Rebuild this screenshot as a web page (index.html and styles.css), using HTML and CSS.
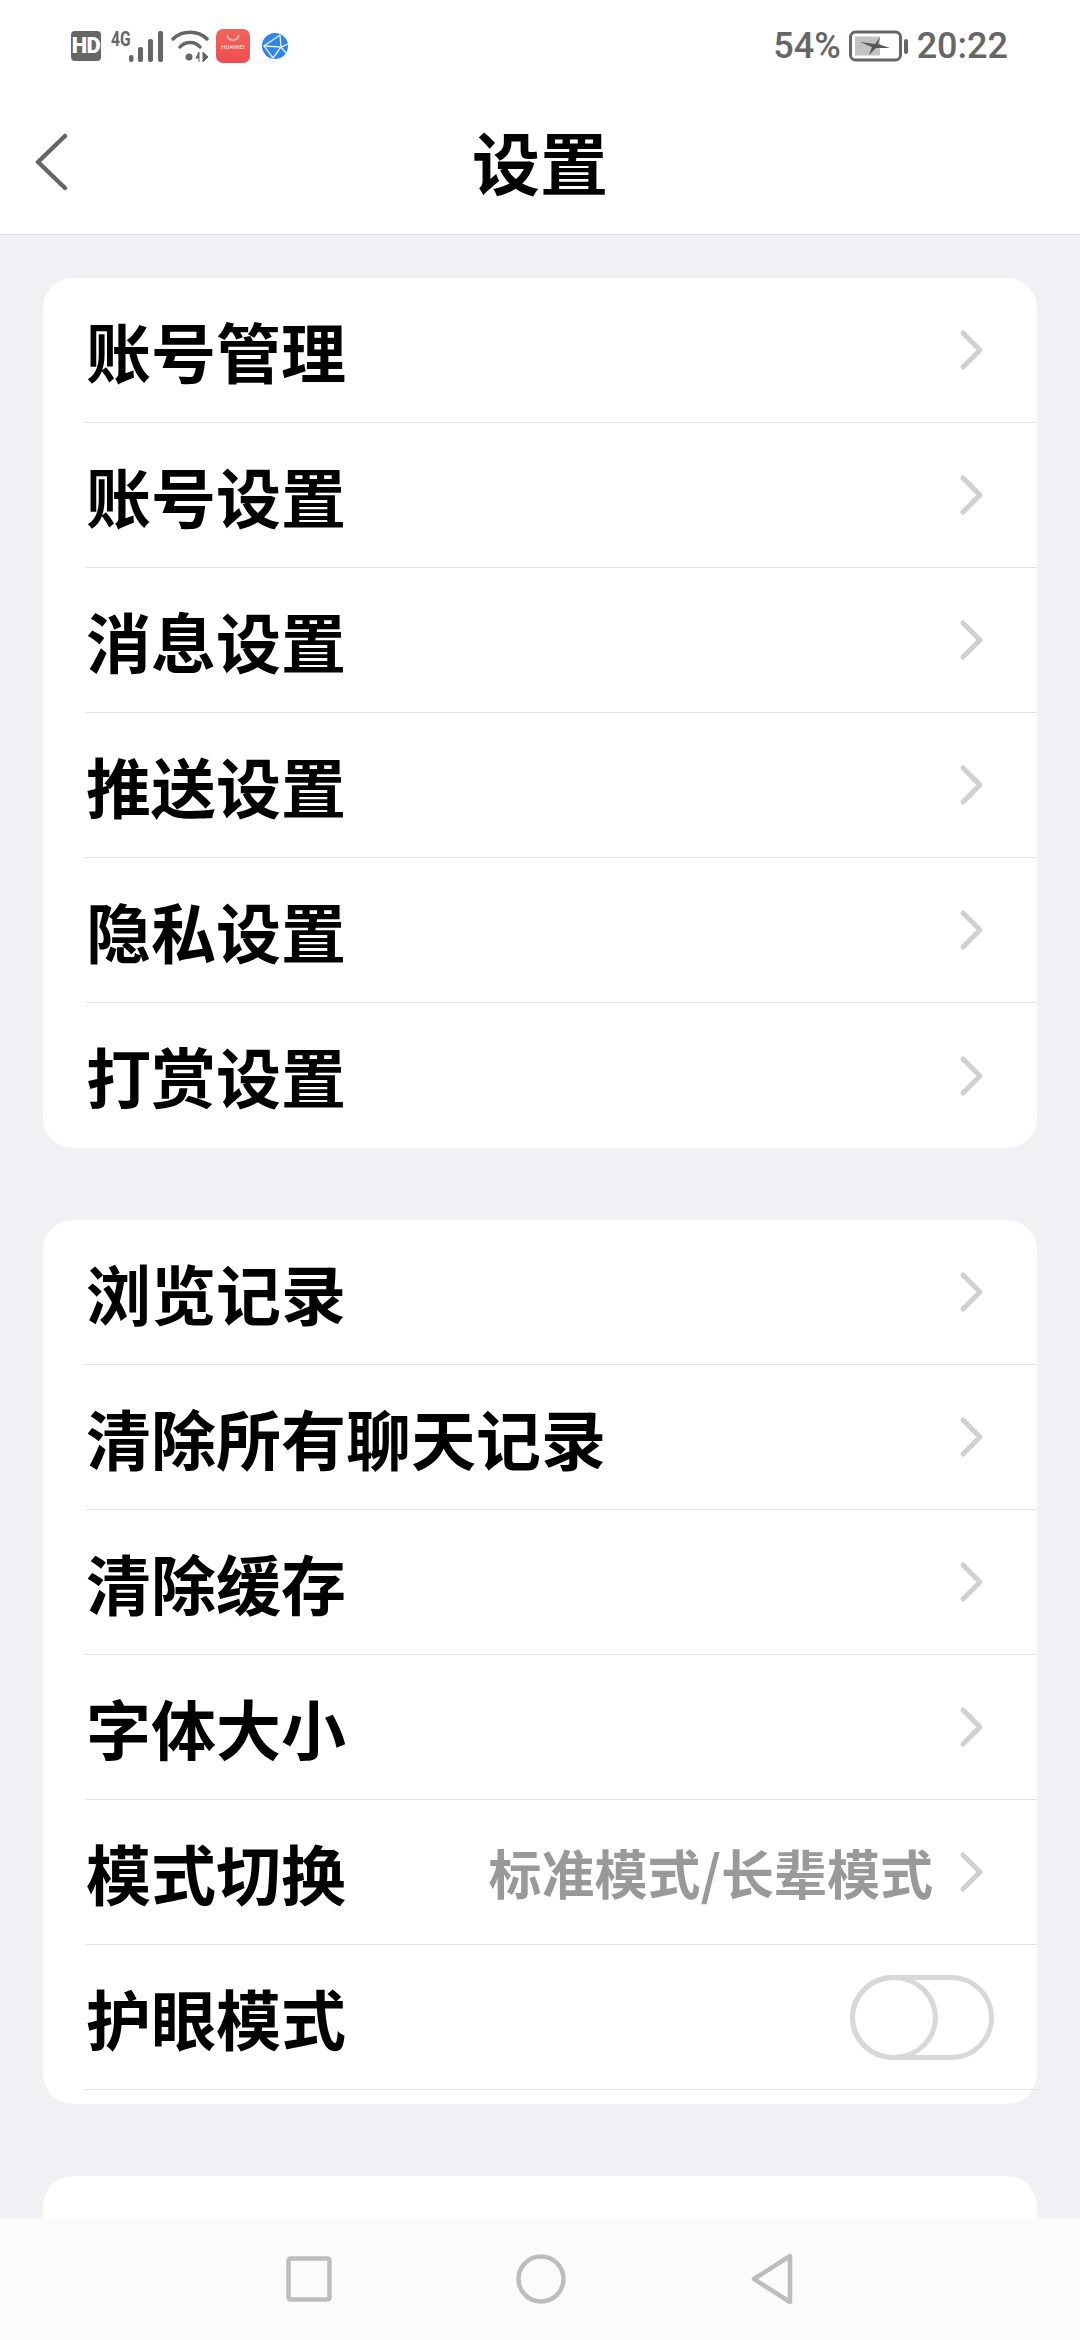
FILE: index.html
```html
<!DOCTYPE html>
<html lang="zh-CN">
<head>
<meta charset="utf-8">
<title>设置</title>
<link rel="stylesheet" href="styles.css">
</head>
<body>
<svg class="defs" width="0" height="0" aria-hidden="true">
  <symbol id="chev" viewBox="0 0 26 42"><path d="M4 4 L21 21 L4 38" fill="none" stroke="#d0d0d0" stroke-width="5" stroke-linecap="round" stroke-linejoin="round"/></symbol>
</svg>
<div class="page">
  <header class="top">
    <div class="status">
      <div class="status-left">
        <span class="hd">HD</span>
        <span class="net">
          <span class="four-g">4G</span>
          <svg class="bars" width="34" height="31" viewBox="0 0 34 31"><g fill="#666"><rect x="0" y="24" width="4.500" height="7" rx="2"/><rect x="9" y="16" width="5" height="15" rx="2"/><rect x="19" y="8" width="5" height="23" rx="2"/><rect x="29" y="0" width="5" height="31" rx="2"/></g></svg>
        </span>
        <svg class="wifi" width="38" height="32" viewBox="0 0 38 32"><g fill="none" stroke="#666" stroke-width="3.500" stroke-linecap="round"><path d="M2 9 C11 0 27 0 36 9"/><path d="M9 17 C14 11 24 11 29 17"/></g><circle cx="18" cy="27" r="3.500" fill="#666"/><path d="M28 32 V22 L25 28 H28 M32 22 V32 L37 27 Z" fill="#666" stroke="#666" stroke-width="1"/></svg>
        <span class="huawei">
          <svg width="14" height="8" viewBox="0 0 14 8"><path d="M1 1 C3 8 11 8 13 1" fill="none" stroke="#fff" stroke-width="1.200" opacity=".8"/></svg>
          <span class="huawei-name">HUAWEI</span>
        </span>
        <svg class="globe" width="26" height="26" viewBox="0 0 26 26"><circle cx="13" cy="13" r="13" fill="#2f86e8"/><g fill="none" stroke="#e4f0fd" stroke-width="1.300"><path d="M18 2 L2 13 L11 25"/><path d="M18 2 L19 14 L11 25"/><path d="M2 13 L19 14 L26 11"/><path d="M19 14 L24 20"/></g></svg>
      </div>
      <div class="status-right">
        <span class="stat-text">54%</span>
        <svg class="battery" width="60" height="32" viewBox="0 0 60 32"><rect x="1.500" y="2" width="50" height="28" rx="5" fill="none" stroke="#666" stroke-width="3"/><rect x="6" y="6.500" width="25" height="19" fill="#c2c2c2"/><path d="M11 12 L26 14 L31 7 L29 14 L41 18 L27 18 L20 25 L23 17 Z" fill="#555"/><rect x="55" y="9" width="4" height="15" rx="2" fill="#666"/></svg>
        <span class="stat-text">20:22</span>
      </div>
    </div>
    <div class="title-bar">
      <svg class="back" width="34" height="58" viewBox="0 0 34 58"><path d="M31 3 L4 29 L31 55" fill="none" stroke="#666" stroke-width="4.500" stroke-linecap="round" stroke-linejoin="round"/></svg>
      <h1 class="title">设置</h1>
    </div>
  </header>

  <main class="content">
    <section class="card">
      <div class="row"><span class="label">账号管理</span><svg class="chevron"><use href="#chev"/></svg></div>
      <div class="row"><span class="label">账号设置</span><svg class="chevron"><use href="#chev"/></svg></div>
      <div class="row"><span class="label">消息设置</span><svg class="chevron"><use href="#chev"/></svg></div>
      <div class="row"><span class="label">推送设置</span><svg class="chevron"><use href="#chev"/></svg></div>
      <div class="row"><span class="label">隐私设置</span><svg class="chevron"><use href="#chev"/></svg></div>
      <div class="row row-last"><span class="label">打赏设置</span><svg class="chevron"><use href="#chev"/></svg></div>
    </section>
    <section class="card card-pad">
      <div class="row"><span class="label">浏览记录</span><svg class="chevron"><use href="#chev"/></svg></div>
      <div class="row"><span class="label">清除所有聊天记录</span><svg class="chevron"><use href="#chev"/></svg></div>
      <div class="row"><span class="label">清除缓存</span><svg class="chevron"><use href="#chev"/></svg></div>
      <div class="row"><span class="label">字体大小</span><svg class="chevron"><use href="#chev"/></svg></div>
      <div class="row"><span class="label">模式切换</span><span class="value">标准模式/长辈模式</span><svg class="chevron"><use href="#chev"/></svg></div>
      <div class="row"><span class="label">护眼模式</span><span class="toggle"><span class="knob"></span></span></div>
    </section>
    <section class="card card-tall"></section>
  </main>

  <nav class="navbar">
    <svg width="46" height="46" viewBox="0 0 46 46"><rect x="2.500" y="2.500" width="41" height="41" rx="2" fill="none" stroke="#bdbdbd" stroke-width="4.500"/></svg>
    <svg width="50" height="50" viewBox="0 0 50 50"><circle cx="25" cy="25" r="22.500" fill="none" stroke="#bdbdbd" stroke-width="4.500"/></svg>
    <svg width="44" height="52" viewBox="0 0 44 52"><path d="M40 3 L4 26 L40 49 Z" fill="none" stroke="#bdbdbd" stroke-width="4.500" stroke-linejoin="round"/></svg>
  </nav>
</div>
</body>
</html>
```
FILE: styles.css
```css
* { box-sizing: border-box; }
html, body { margin: 0; padding: 0; }
body {
  font-family: "Noto Sans CJK SC", "Noto Sans", sans-serif;
  background: #f0f0f5;
}
.defs { position: absolute; }
.page {
  position: relative;
  width: 1080px;
  height: 2340px;
  overflow: hidden;
  background: #f0f0f5;
}
.top {
  height: 235px;
  background: #fff;
  border-bottom: 1px solid #e0e0e6;
}
.status {
  height: 92px;
  padding: 0 72px 0 71px;
  display: flex;
  align-items: center;
  justify-content: space-between;
}
.status-left { display: flex; align-items: center; }
.hd {
  width: 30px;
  height: 30px;
  border-radius: 4px;
  background: #666;
  color: #fff;
  font: 900 22px/30px "Roboto", sans-serif;
  text-align: center;
  letter-spacing: -0.5px;
}
.net { display: flex; align-items: flex-end; margin-left: 10px; }
.four-g {
  font: 700 20px/16px "Roboto", sans-serif;
  color: #666;
  align-self: flex-start;
  width: 18px;
  transform: scaleX(.78);
  transform-origin: left;
}
.wifi { margin-left: 8px; }
.huawei {
  width: 34px;
  height: 34px;
  margin-left: 7px;
  border-radius: 7px;
  background: linear-gradient(#f2645e, #ee4e50);
  display: flex;
  flex-direction: column;
  align-items: center;
  padding-top: 5px;
}
.huawei-name {
  font: 400 6px/10px "Roboto", sans-serif;
  color: #fff;
  letter-spacing: .3px;
}
.globe { margin-left: 12px; }
.status-right {
  display: flex;
  align-items: center;
  gap: 8px;
  color: #666;
}
.stat-text {
  font: 500 36px/40px "Roboto", sans-serif;
}
.title-bar {
  position: relative;
  height: 142px;
  display: flex;
  align-items: center;
  justify-content: center;
}
.back { position: absolute; left: 34px; top: 41px; }
.title {
  margin: 0 0 4px;
  font-size: 68px;
  line-height: 90px;
  font-weight: 700;
  color: #000;
}
.content {
  padding: 43px 43px 0;
  display: flex;
  flex-direction: column;
  gap: 72px;
}
.card {
  background: #fff;
  border-radius: 30px;
  padding-left: 42px;
  flex: none;
}
.card-pad { padding-bottom: 14px; }
.card-tall { height: 120px; }
.row {
  height: 145px;
  display: flex;
  align-items: center;
  border-bottom: 1px solid #e2e2e4;
  padding-right: 52px;
}
.row-last { border-bottom: 0; }
.label {
  flex: 1;
  font-size: 65px;
  line-height: 80px;
  font-weight: 700;
  color: #000;
  padding-left: 1px;
  padding-bottom: 1px;
}
.value {
  font-size: 53px;
  line-height: 70px;
  font-weight: 700;
  color: #999;
  margin-right: 26px;
}
.chevron { width: 26px; height: 42px; flex: none; }
.toggle {
  width: 144px;
  height: 85px;
  margin-right: -9px;
  border: 5px solid #d8d8d8;
  border-radius: 43px;
  display: block;
  position: relative;
  flex: none;
}
.knob {
  position: absolute;
  left: -5px;
  top: -5px;
  width: 88px;
  height: 85px;
  border: 5px solid #d8d8d8;
  border-radius: 50%;
  background: #fff;
}
.navbar {
  position: absolute;
  left: 0;
  right: 0;
  bottom: 0;
  height: 122px;
  background: #fbfbfb;
  display: grid;
  grid-template-columns: 46px 50px 44px;
  justify-content: center;
  column-gap: 184px;
  align-items: center;
}
```
